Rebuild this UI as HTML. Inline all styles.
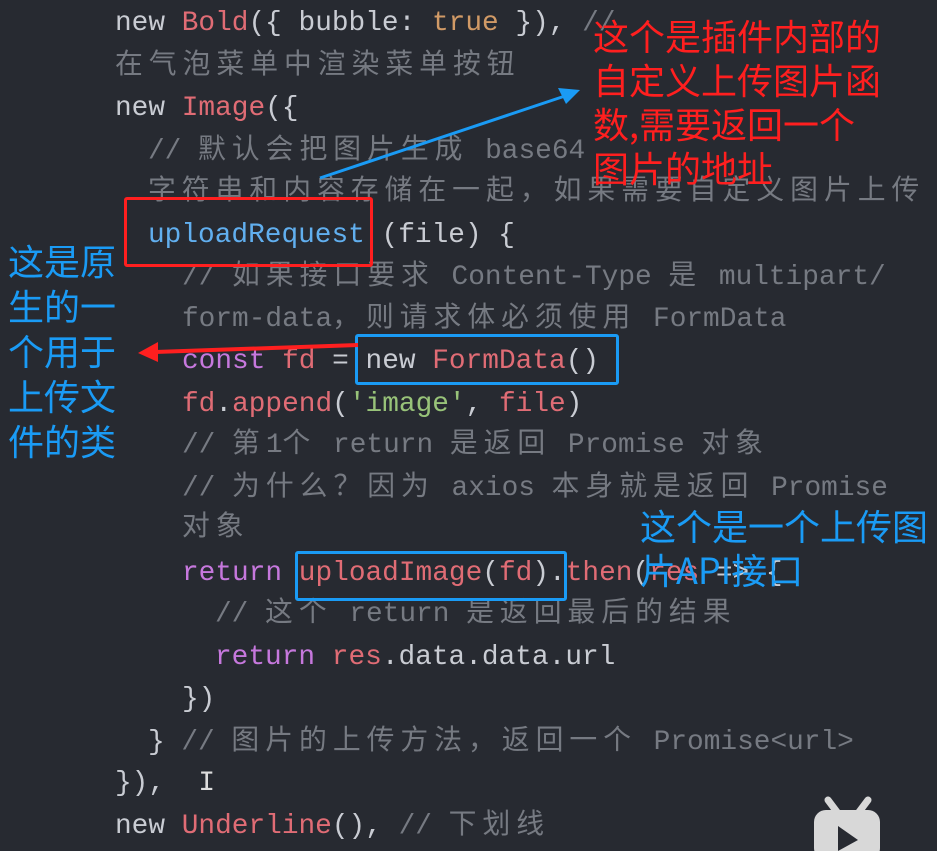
<!DOCTYPE html>
<html><head><meta charset="utf-8"><style>
body{margin:0;width:937px;height:851px;background:#272a31;overflow:hidden;position:relative;font-family:"Liberation Mono","Noto Sans CJK SC",monospace;}
.l{position:absolute;font-size:27.8px;white-space:pre;color:#c9ccd3;line-height:42px;margin-top:3px}
.c{color:#767a82}
.k{color:#c678dd}.r{color:#e06c75}.b{color:#61afef}.o{color:#d19a66}.g{color:#98c379}
.z{letter-spacing:6px}
.ann{position:absolute;font-family:"Noto Sans CJK SC","WenQuanYi Zen Hei",sans-serif;font-size:36px;line-height:44px;white-space:pre;}
.box{position:absolute;border-radius:3px;}
</style></head><body>
<div class="l" style="left:115px;top:0">new <span class="r">Bold</span>({ bubble: <span class="o">true</span> }), <span class="c">//</span></div>
<div class="l c" style="left:115px;top:43px"><span class="z">在气泡菜单中渲染菜单按钮</span></div>
<div class="l" style="left:115px;top:85px">new <span class="r">Image</span>({</div>
<div class="l c" style="left:148px;top:128px">// <span class="z">默认会把图片生成</span> base64</div>
<div class="l c" style="left:148px;top:169px"><span class="z">字符串和内容存储在一起，如果需要自定义图片上传</span></div>
<div class="l" style="left:148px;top:212px"><span class="b">uploadRequest</span> (file) {</div>
<div class="l c" style="left:182px;top:254px">// <span class="z">如果接口要求</span> Content-Type <span class="z">是</span> multipart/</div>
<div class="l c" style="left:182px;top:296px">form-data<span class="z">，则请求体必须使用</span> FormData</div>
<div class="l" style="left:182px;top:338px"><span class="k">const</span> <span class="r">fd</span> = new <span class="r">FormData</span>()</div>
<div class="l" style="left:182px;top:381px"><span class="r">fd</span>.<span class="r">append</span>(<span class="g">'image'</span>, <span class="r">file</span>)</div>
<div class="l c" style="left:182px;top:422px">// <span class="z">第</span>1<span class="z">个</span> return <span class="z">是返回</span> Promise <span class="z">对象</span></div>
<div class="l c" style="left:182px;top:465px">// <span class="z">为什么？因为</span> axios <span class="z">本身就是返回</span> Promise</div>
<div class="l c" style="left:182px;top:505px"><span class="z">对象</span></div>
<div class="l" style="left:182px;top:550px"><span class="k">return</span> <span class="r">uploadImage</span>(<span class="r">fd</span>).<span class="r">then</span>(<span class="r">res</span> =&gt; {</div>
<div class="l c" style="left:215px;top:591px">// <span class="z">这个</span> return <span class="z">是返回最后的结果</span></div>
<div class="l" style="left:215px;top:634px"><span class="k">return</span> <span class="r">res</span>.data.data.url</div>
<div class="l" style="left:182px;top:676px">})</div>
<div class="l" style="left:148px;top:719px">} <span class="c">// <span class="z">图片的上传方法，返回一个</span> Promise&lt;url&gt;</span></div>
<div class="l" style="left:115px;top:760px">}),  <span style="color:#ddd">I</span></div>
<div class="l" style="left:115px;top:803px">new <span class="r">Underline</span>(), <span class="c">// <span class="z">下划线</span></span></div>

<div class="box" style="left:124px;top:197px;width:243px;height:64px;border:3px solid #ff1f1f"></div>
<div class="box" style="left:355px;top:334px;width:258px;height:45px;border:3px solid #1a9bf5"></div>
<div class="box" style="left:295px;top:551px;width:266px;height:44px;border:3px solid #1a9bf5"></div>

<svg style="position:absolute;left:0;top:0" width="937" height="851">
<line x1="320" y1="178" x2="565" y2="96" stroke="#1a9bf5" stroke-width="3"/>
<polygon points="580,90 558,88 566,104" fill="#1a9bf5"/>
<line x1="358" y1="345" x2="155" y2="352" stroke="#ff1f1f" stroke-width="4"/>
<polygon points="138,353 158,342 158,362" fill="#ff1f1f"/>
<path d="M828 800 l12 16 M868 800 l-12 16" stroke="#d8d8d8" stroke-width="7" stroke-linecap="round"/>
<rect x="814" y="810" width="66" height="50" rx="12" fill="#d8d8d8"/>
<polygon points="838,826 838,851 858,840" fill="#272a31"/>
</svg>

<div class="ann" style="left:593px;top:13px;color:#ff1f1f">这个是插件内部的
自定义上传图片函
数,需要返回一个
图片的地址</div>
<div class="ann" style="left:8px;top:238px;color:#1a9bf5;line-height:45px">这是原
生的一
个用于
上传文
件的类</div>
<div class="ann" style="left:640px;top:503px;color:#1a9bf5">这个是一个上传图
片API接口</div>
</body></html>
